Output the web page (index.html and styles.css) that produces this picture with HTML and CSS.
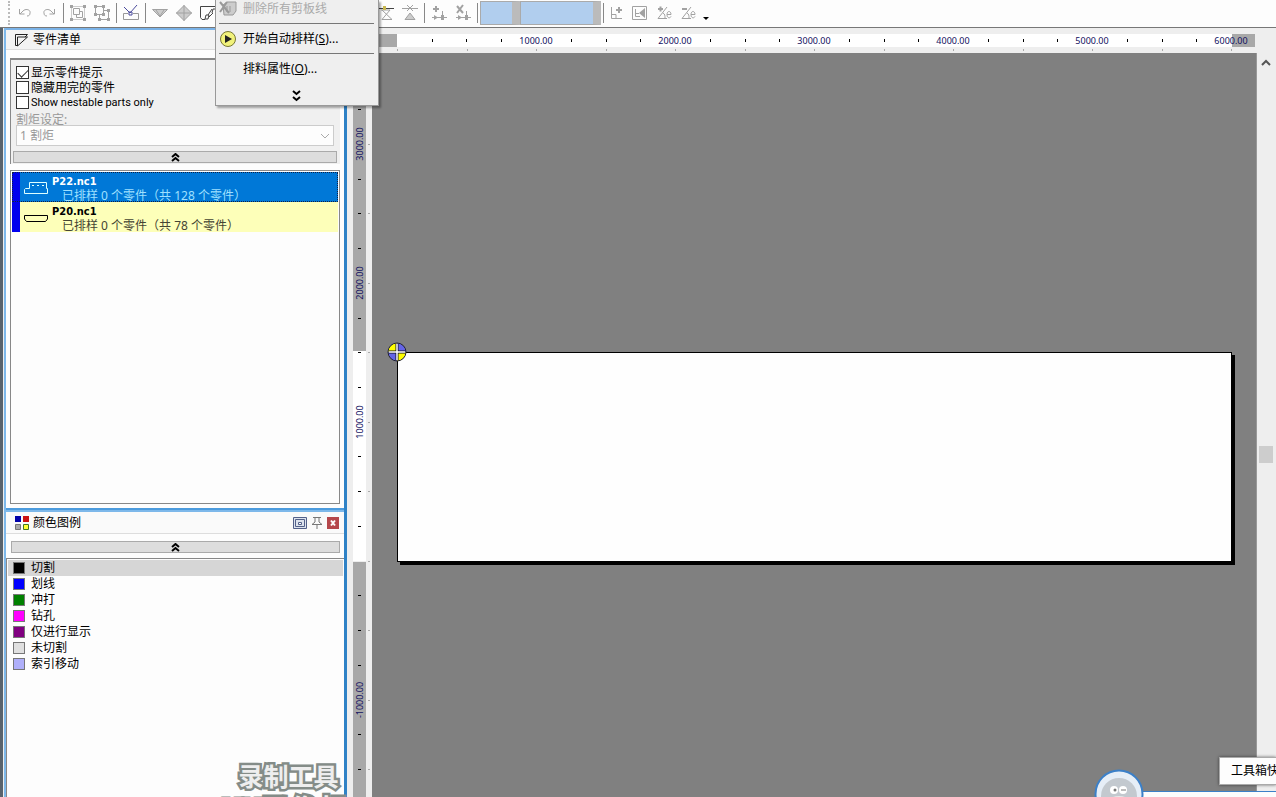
FILE: index.html
```
<!DOCTYPE html>
<html lang="zh-CN">
<head>
<meta charset="utf-8">
<title>零件清单</title>
<link rel="stylesheet" href="styles.css">
</head>
<body>
<header class="toolbar">
  <span class="grip"></span>
  <button class="tool undo" aria-label="撤销"><svg width="16" height="16" viewBox="0 0 16 16"><path d="M2.500 4v5h5M3 9l3-3c3-3 8-1 7 2 0 2-1 3-3 3" /></svg></button>
  <button class="tool" aria-label="重做"><svg width="16" height="16" viewBox="0 0 16 16"><path d="M13.500 4v5h-5M13 9l-3-3C7 3 2 5 3 8c0 2 1 3 3 3" /></svg></button>
  <span class="divider"></span>
  <button class="tool" aria-label="组合"><svg width="18" height="18" viewBox="0 0 18 18"><path class="faint" d="M2.500 2.500h13v13h-13z"/><path d="M4.500 4.500h6v6h-6zM11 7.500h2.500v6h-6V11"/><path class="fill" d="M1 1h3v3H1zM14 1h3v3h-3zM1 14h3v3H1zM14 14h3v3h-3z"/></svg></button>
  <button class="tool" aria-label="取消组合"><svg width="18" height="18" viewBox="0 0 18 18"><path d="M2.500 2.500h8v8h-8zM11 6.500h4.500v9h-9V11"/><path class="fill" d="M1 1h3v3H1zM9 1h3v3H9zM1 9h3v3H1zM9 9h3v3H9zM14 5h3v3h-3zM5 14h3v3H5zM14 14h3v3h-3z"/></svg></button>
  <span class="divider"></span>
  <button class="tool" aria-label="剪切线"><svg width="18" height="18" viewBox="0 0 18 18"><path class="dim" d="M6 9.500H1.500v6h15v-6H11"/><path class="blue" d="M2 3l6 6 7-8M7 8h3v3H7z"/></svg></button>
  <span class="divider"></span>
  <button class="tool" aria-label="向下"><svg width="18" height="18" viewBox="0 0 18 18"><path class="shade" d="M1.500 5.500h15L9 13z"/><path d="M5 6l4 6 4-6"/></svg></button>
  <button class="tool" aria-label="移动"><svg width="18" height="18" viewBox="0 0 18 18"><path class="shade" d="M9 1.500l7.500 7.500L9 16.500 1.500 9zM9 1v16M1 9h16"/></svg></button>
  <button class="tool" aria-label="链接零件"><svg width="18" height="18" viewBox="0 0 18 18"><path class="dark" d="M17 2.500H1.500v11L3 15.500h3"/><path class="dark" d="M6 15l1-4h3l-1 4zM9 11l4-6M10 13l4-4M13 9l1-4h3"/></svg></button>
  <span class="menu-gap"></span>
  <button class="tool" aria-label="起点"><svg width="18" height="18" viewBox="0 0 18 18"><path class="dark" d="M0 4.500h17"/><path d="M4 6h9l-8 9.500h10L5 6"/><path class="gold" d="M6 2h3v4H6z"/></svg></button>
  <button class="tool" aria-label="删除起点"><svg width="18" height="18" viewBox="0 0 18 18"><path d="M1 4.500h16M6 1l6 6M12 1L6 7"/><path class="shade" d="M4 15.500h10L9 9z"/></svg></button>
  <span class="divider"></span>
  <button class="tool" aria-label="添加顺序"><svg width="18" height="18" viewBox="0 0 18 18"><path class="thick" d="M3 5h6M6 2v6"/><path d="M2 13.500h15M12.500 15V7"/><path class="fill" d="M4 11l4 2.500L4 16zM11 11h3v5h-3z"/></svg></button>
  <button class="tool" aria-label="删除顺序"><svg width="18" height="18" viewBox="0 0 18 18"><path class="thick" d="M3 2l6 7M9 1L3 9"/><path d="M2 13.500h15M12.500 15V7"/><path class="fill" d="M4 11l4 2.500L4 16zM11 11h3v5h-3z"/></svg></button>
  <span class="divider"></span>
  <select class="combo combo-small" aria-label="图层" disabled><option></option></select>
  <select class="combo" aria-label="类型" disabled><option></option></select>
  <span class="divider short"></span>
  <button class="tool" aria-label="添加角点"><svg width="18" height="18" viewBox="0 0 18 18"><path d="M4.500 3v11.500H15M5 10.500h4v4"/><path class="thick" d="M9 6h6M12 3v6"/></svg></button>
  <button class="tool" aria-label="镜像"><svg width="18" height="18" viewBox="0 0 18 18"><path d="M1.500 2.500h14v13h-14zM4.500 5v7.500H9M5 9.500h3"/><path class="fill" d="M14 4v10L8 9z"/></svg></button>
  <button class="tool" aria-label="增加角度"><svg width="18" height="18" viewBox="0 0 18 18"><path class="thick" d="M3 5h5M5.500 2.500v5"/><path d="M12 3L3 14.500h9M8 9c2 1 2 3 2 5M12 10.500h4c0-4-4-4-4 0s3 4 4 2"/></svg></button>
  <button class="tool" aria-label="减少角度"><svg width="18" height="18" viewBox="0 0 18 18"><path class="thick" d="M3 5h5"/><path d="M12 3L3 14.500h9M8 9c2 1 2 3 2 5M12 10.500h4c0-4-4-4-4 0s3 4 4 2"/></svg></button>
  <button class="overflow" aria-label="更多工具"></button>
</header>

<div class="workspace">
  <aside class="dock">
    <section class="panel parts">
      <h2 class="panel-title">
        <svg width="16" height="16" viewBox="0 0 16 16"><path class="outline" d="M3 13.500H1.500v-11h12L11 5M3.500 14V5h10z"/></svg>
        <span>零件清单</span>
      </h2>
      <div class="filters">
        <label class="check"><input type="checkbox" checked>显示零件提示</label>
        <label class="check"><input type="checkbox">隐藏用完的零件</label>
        <label class="check"><input type="checkbox">Show nestable parts only</label>
        <label class="torch-label" for="torch">割炬设定:</label>
        <div class="torch">
          <select id="torch" disabled><option>1 割炬</option></select>
          <svg width="10" height="6" viewBox="0 0 10 6"><path d="M1 1l4 4 4-4"/></svg>
        </div>
        <button class="collapse" aria-label="收起"><svg width="9" height="9" viewBox="0 0 9 9"><path d="M1 4l3.500-3L8 4M1 8l3.500-3L8 8"/></svg></button>
      </div>
      <ul class="part-list">
        <li class="part selected">
          <svg width="24" height="14" viewBox="0 0 24 14"><path d="M5.500 1.500h17v6h1v5H.5v-4l1-1h4z"/><path d="M8 4.500h2M13 4.500h2M18 4.500h2"/></svg>
          <div><strong>P22.nc1</strong><p>已排样 0 个零件（共 128 个零件）</p></div>
        </li>
        <li class="part">
          <svg width="24" height="14" viewBox="0 0 24 14"><path d="M.5 4.500h23V8l-2 2.500h-19L.5 8z"/></svg>
          <div><strong>P20.nc1</strong><p>已排样 0 个零件（共 78 个零件）</p></div>
        </li>
      </ul>
    </section>

    <section class="panel legend">
      <h2 class="panel-title">
        <svg width="16" height="16" viewBox="0 0 16 16"><path fill="#00a" d="M1 1h6v6H1z"/><path fill="#c11" d="M9 1h6v6H9z"/><path fill="#aaa" stroke="#777" d="M1.500 9.500h5v5h-5z"/><path fill="#ff3" stroke="#472" d="M9.500 9.500h5v5h-5z"/></svg>
        <span>颜色图例</span>
        <span class="panel-actions">
          <button aria-label="最大化"><svg width="14" height="14" viewBox="0 0 14 14"><path fill="#dde3ee" stroke="#53618a" d="M.5 1.500h13v11H.5zM2.500 3.500h9v7h-9z"/><path fill="#fff" stroke="#53618a" d="M5.500 6.500h3v2h-3z"/></svg></button>
          <button aria-label="固定"><svg width="12" height="14" viewBox="0 0 12 14"><path fill="none" stroke="#777" d="M2 1.500h8M4 2v4L1 8.500h10L8 6V2M6 9v4"/></svg></button>
          <button aria-label="关闭"><svg width="12" height="12" viewBox="0 0 12 12"><path fill="#b5474b" d="M0 0h12v12H0z"/><path fill="none" stroke="#fff" stroke-width="2" d="M4 3.500l4 5M8 3.500l-4 5"/></svg></button>
        </span>
      </h2>
      <button class="collapse" aria-label="收起"><svg width="9" height="9" viewBox="0 0 9 9"><path d="M1 4l3.500-3L8 4M1 8l3.500-3L8 8"/></svg></button>
      <ul class="color-list">
        <li class="current"><i class="swatch cut"></i>切割</li>
        <li><i class="swatch scribe"></i>划线</li>
        <li><i class="swatch punch"></i>冲打</li>
        <li><i class="swatch drill"></i>钻孔</li>
        <li><i class="swatch display"></i>仅进行显示</li>
        <li><i class="swatch uncut"></i>未切割</li>
        <li><i class="swatch index"></i>索引移动</li>
      </ul>
    </section>
  </aside>

  <main class="drawing">
    <svg class="ruler-h">
      <rect class="out" x="0" y="6" width="50" height="13"/>
      <rect class="in" x="50" y="6" width="835" height="13"/>
      <rect class="out" x="885" y="6" width="23" height="13"/>
      <path class="tick" d="M85.500 11v3M119.500 11v3M154.500 11v3M224.500 11v3M259.500 11v3M293.500 11v3M363.500 11v3M398.500 11v3M432.500 11v3M502.500 11v3M537.500 11v3M571.500 11v3M641.500 11v3M676.500 11v3M710.500 11v3M780.500 11v3M815.500 11v3M849.500 11v3"/>
      <path class="minor" d="M50.500 21v2M120.500 21v2M189.500 21v2M259.500 21v2M328.500 21v2M398.500 21v2M467.500 21v2M537.500 21v2M606.500 21v2M676.500 21v2M745.500 21v2M815.500 21v2M884.500 21v2"/>
      <text x="189" y="16">1000.00</text><text x="328" y="16">2000.00</text><text x="467" y="16">3000.00</text><text x="606" y="16">4000.00</text><text x="745" y="16">5000.00</text><text x="884" y="16">6000.00</text>
    </svg>
    <svg class="ruler-v">
      <rect class="out" x="6" y="0" width="13" height="298"/>
      <rect class="in" x="6" y="298" width="13" height="210"/>
      <rect class="out" x="6" y="509" width="13" height="100%"/>
      <path class="tick" d="M11 56.500h3M11 126.500h3M11 160.500h3M11 195.500h3M11 265.500h3M11 299.500h3M11 334.500h3M11 403.500h3M11 438.500h3M11 473.500h3M11 542.500h3M11 577.500h3M11 612.500h3M11 681.500h3M11 716.500h3"/>
      <path class="minor" d="M21 91.500h2M21 160.500h2M21 230.500h2M21 299.500h2M21 369.500h2M21 438.500h2M21 508.500h2M21 577.500h2M21 647.500h2M21 716.500h2"/>
      <text transform="translate(16 91) rotate(-90)">3000.00</text>
      <text transform="translate(16 230) rotate(-90)">2000.00</text>
      <text transform="translate(16 369) rotate(-90)">1000.00</text>
      <text transform="translate(16 647) rotate(-90)">-1000.00</text>
    </svg>
    <div class="canvas">
      <div class="plate"></div>
      <svg class="origin" width="22" height="22" viewBox="0 0 22 22">
        <circle cx="11" cy="11" r="9" fill="#6464e6"/>
        <path fill="#ff0" d="M11 11V2a9 9 0 0 0-9 9zM11 11v9a9 9 0 0 0 9-9z"/>
        <path stroke="#112" stroke-width="3" d="M11 3v16M3 11h16"/><path stroke="#fff" stroke-width="1.500" d="M11 3v16M3 11h16"/>
        <circle cx="11" cy="11" r="9" fill="none" stroke="#223"/>
      </svg>
    </div>
    <div class="scrollbar">
      <svg width="10" height="7" viewBox="0 0 10 7"><path d="M1 6l4-4 4 4"/></svg>
      <span class="thumb"></span>
    </div>
  </main>
</div>

<nav class="menu">
  <button disabled><svg width="18" height="18" viewBox="0 0 18 18"><path fill="#ccc" stroke="#999" d="M4 5l4-3h9v9l-3 4H5zM8 6v6M11 6v6"/><path fill="none" stroke="#999" stroke-width="2" d="M1 2l9 11M8 2L1 12"/></svg>删除所有剪板线</button>
  <hr>
  <button><svg width="18" height="18" viewBox="0 0 18 18"><circle cx="9" cy="9" r="7.500" fill="#f1f27b" stroke="#777733"/><path fill="#222" d="M6 5l7 4-7 4z"/></svg><span>开始自动排样(<u>S</u>)...</span></button>
  <hr>
  <button><span class="no-icon"></span><span>排料属性(<u>O</u>)...</span></button>
  <button class="expand" aria-label="展开"><svg width="9" height="12" viewBox="0 0 9 12"><path d="M1 1l3.500 3L8 1M1 7l3.500 3L8 7"/></svg></button>
</nav>

<div class="watermark"><span>录制工具</span><span>KK录像机</span></div>
<div class="taskstrip"></div>
<svg class="mascot" width="50" height="50" viewBox="0 0 50 50">
  <circle cx="25" cy="25" r="23.500" fill="#e6eef7" stroke="#3c80c8" stroke-width="2"/>
  <circle cx="25" cy="27" r="18" fill="#c3c9cf"/>
  <circle cx="20" cy="21" r="4" fill="#fff"/><circle cx="29" cy="21" r="4" fill="#fff"/>
  <circle cx="21" cy="21" r="1.500" fill="#777"/><path d="M27 21h5" stroke="#777"/>
  <ellipse cx="25" cy="31" rx="9" ry="4" fill="#e8e8e8"/>
</svg>
<div class="tip">工具箱快捷</div>
</body>
</html>
```
FILE: styles.css
```
* { box-sizing: border-box; }
body {
  margin: 0;
  height: 100vh;
  overflow: hidden;
  position: relative;
  display: flex;
  flex-direction: column;
  background: #f0f0f0;
  color: #000;
  font: 12px/16px "Noto Sans", "Noto Sans CJK SC", sans-serif;
}
button { padding: 0; border: 0; background: none; font: inherit; color: inherit; }
ul, p, h2 { margin: 0; padding: 0; list-style: none; }
svg { display: block; flex: none; }

.toolbar {
  flex: none;
  height: 28px;
  padding: 0 0 2px 8px;
  display: flex;
  align-items: center;
  background: #fdfdfd;
  border-bottom: 1px solid #777;
}
.grip { height: 24px; margin-right: 3px; border-left: 2px dotted #bbb; }
.tool { width: 24px; display: grid; place-items: center; }
.tool svg { fill: none; stroke: #a2a2a2; }
.tool .fill { fill: #a2a2a2; stroke: none; }
.tool .faint { stroke: #ccc; }
.tool .dim { stroke: #999; }
.tool .blue { stroke: #4a4a9c; }
.tool .shade { fill: #ccc; stroke: #a2a2a2; }
.tool .dark { stroke: #444; }
.tool .gold { fill: #c8b850; stroke: none; }
.tool .thick { stroke-width: 2; }
.divider { flex: none; width: 1px; height: 20px; margin: 0 2px; background: #888; }
.divider.short { margin-right: 0; }
.menu-gap { width: 154px; }
.combo { appearance: none; width: 81px; height: 24px; border: 1px solid #aaa; border-right: 8px solid #bbb; border-radius: 0; background: #b1ceee; opacity: 1; }
.combo-small { width: 40px; }
.overflow { margin: 12px 0 0 3px; border: 3px solid transparent; border-top-color: #000; border-bottom: 0; }

.workspace { flex: 1; min-height: 0; display: flex; padding-left: 4px; background: linear-gradient(90deg, #59636c 3px, #eee 3px); }
.dock {
  flex: none;
  width: 343px;
  display: flex;
  flex-direction: column;
  background: #fdfdfd;
  border-left: 2px solid #7db8ea;
  border-right: 3px solid #2f82c6;
}
.panel { display: flex; flex-direction: column; }
.parts { flex: none; height: 482px; border-top: 2px solid #7bb3e8; border-bottom: 2px solid #4c9bdd; }
.panel-title {
  height: 20px;
  padding: 0 5px 0 8px;
  display: flex;
  align-items: center;
  gap: 3px;
  font-size: 12px;
  font-weight: 400;
  background: #f3f3f3;
  border-bottom: 1px solid #ddd;
}
.outline { fill: none; stroke: #222; }
.panel-actions { margin-left: auto; display: flex; align-items: center; gap: 4px; }
.filters {
  height: 106px;
  margin: 8px 4px 0;
  padding: 5px 3px 0 5px;
  background: #f0f0f0;
  border-top: 2px solid #888;
  border-left: 1px solid #888;
}
.check { height: 15px; display: flex; align-items: center; gap: 2px; }
.check:nth-child(3) { font: 11px/15px Roboto, sans-serif; }
.check input { appearance: none; width: 13px; height: 13px; margin: 0; border: 1px solid #333; background: #fff; }
.check input:checked { display: grid; place-items: center; }
.check input:checked::before { content: ""; width: 9px; height: 5px; margin-bottom: 2px; border: solid #333; border-width: 0 0 1px 1px; transform: rotate(-45deg); }
.torch-label { display: block; height: 13px; line-height: 16px; margin-top: 2px; color: #999; }
.torch { display: grid; align-items: center; margin-right: 3px; }
.torch > * { grid-area: 1 / 1; }
.torch select { appearance: none; width: 100%; height: 21px; padding: 0 3px; border: 1px solid #ccc; border-radius: 0; background: #fdfdfd; color: #999; font: inherit; opacity: 1; }
.torch svg { justify-self: end; margin-right: 4px; fill: none; stroke: #aaa; }
.collapse { flex: none; height: 12px; display: grid; place-items: center; border: 1px solid #aaa; background: #ddd; }
.collapse svg, .expand svg { fill: none; stroke: #000; stroke-width: 2; }
.filters .collapse { width: calc(100% + 3px); margin: 5px 0 0 -3px; }

.part-list { flex: 1; margin: 6px 4px 4px; padding: 1px; border: 1px solid #888; }
.part { height: 30px; padding: 2px 0 0 4px; display: flex; gap: 4px; align-items: center; border-left: 8px solid #00e; background: #fdffb9; }
.part svg { fill: none; stroke: #000; }
.part strong { display: block; font: bold 11px/14px "DejaVu Sans Condensed", "Noto Sans", sans-serif; }
.part p { padding-left: 10px; line-height: 13px; color: #443; font-size: 12px; }
.part.selected { background: #0078d7; color: #fff; outline: 1px dotted #124; outline-offset: -1px; }
.part.selected svg { stroke: #dff; }
.part.selected p { color: #9fe0ff; }

.legend { flex: 1; border-top: 2px solid #7db8ea; }
.legend .panel-title { height: 22px; background: #fafafa; }
.legend > .collapse { margin: 7px 4px 5px 5px; }
.color-list { flex: 1; padding: 1px; border-top: 1px solid #888; border-left: 1px solid #888; }
.color-list li { height: 16px; padding-left: 5px; display: flex; align-items: center; gap: 6px; line-height: 18px; }
.color-list .current { background: #d6d6d6; }
.swatch { width: 12px; height: 12px; border: 1px solid #777; }
.cut { background: #000; }
.scribe { background: #00f; }
.punch { background: #008000; }
.drill { background: #f0f; }
.display { background: #800080; }
.uncut { background: #e0e0e0; }
.index { background: #b0b0fa; }

.drawing { flex: 1; min-width: 0; display: grid; grid-template: 25px 1fr / 25px 1fr 20px; }
.ruler-h { grid-column: 1 / 4; width: 100%; height: 25px; }
.ruler-v { width: 25px; height: 100%; }
.out { fill: #a8a8a8; }
.in { fill: #fff; }
.tick { stroke: #000; }
.minor { stroke: #aaa; }
.drawing text { fill: #101060; font: 9px "Noto Sans", sans-serif; text-anchor: middle; }
.canvas { position: relative; overflow: hidden; background: #808080; }
.plate { position: absolute; top: 299px; left: 25px; right: 24px; height: 210px; background: #fefefe; border: 1px solid #000; box-shadow: 3px 3px 0 #000; }
.origin { position: absolute; top: 288px; left: 14px; }
.scrollbar { padding: 6px 2px 0 1px; display: flex; flex-direction: column; align-items: center; border-left: 1px solid #999; background: #eee; }
.scrollbar svg { fill: none; stroke: #555; stroke-width: 2; }
.thumb { width: 14px; height: 17px; margin-top: 380px; background: #cdcdcd; }

.menu { position: absolute; top: 0; left: 215px; width: 164px; height: 106px; padding: 0 4px 0 3px; display: flex; flex-direction: column; background: #efefef; border: 1px solid #999; border-top: 0; box-shadow: 2px 2px 2px #0005; }
.menu button { height: 17px; display: flex; align-items: center; gap: 6px; text-align: left; }
.menu button:disabled { color: #aaa; }
.menu hr { width: 100%; margin: 6px 0; border: 0; border-top: 1px solid #777; }
.no-icon { width: 18px; }
.menu .expand { margin-top: 10px; justify-content: center; }

.watermark { position: absolute; top: 760px; left: 216px; width: 137px; display: flex; flex-direction: column; align-items: center; font: bold 25px/31px "Noto Sans CJK SC", sans-serif; color: #eee; -webkit-text-stroke: 5px #848c88; paint-order: stroke fill; white-space: nowrap; }
.watermark span { padding-left: 8px; }
.watermark span + span { padding: 0; font-size: 29px; line-height: 34px; }
.taskstrip { position: absolute; left: 1120px; right: 0; bottom: 0; height: 6px; background: #fdfdfd; border-top: 1px solid #3c80c8; }
.mascot { position: absolute; left: 1094px; top: 769px; }
.tip { position: absolute; left: 1219px; right: 0; top: 757px; padding: 5px 0 5px 11px; background: #fdfdfd; border: 1px solid #aaa; border-right: 0; box-shadow: 0 0 3px #0008; white-space: nowrap; overflow: hidden; }
```
